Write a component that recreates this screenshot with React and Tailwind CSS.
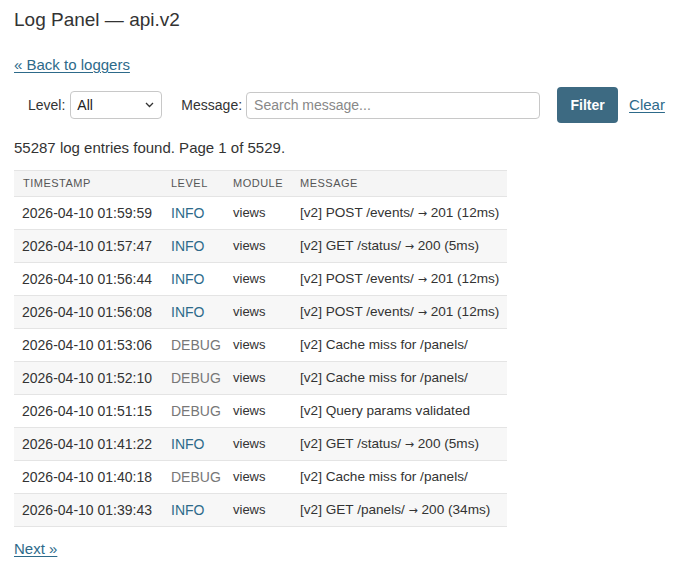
const rows = [
  ["2026-04-10 01:59:59", "INFO", "views", "[v2] POST /events/", "201 (12ms)"],
  ["2026-04-10 01:57:47", "INFO", "views", "[v2] GET /status/", "200 (5ms)"],
  ["2026-04-10 01:56:44", "INFO", "views", "[v2] POST /events/", "201 (12ms)"],
  ["2026-04-10 01:56:08", "INFO", "views", "[v2] POST /events/", "201 (12ms)"],
  ["2026-04-10 01:53:06", "DEBUG", "views", "[v2] Cache miss for /panels/"],
  ["2026-04-10 01:52:10", "DEBUG", "views", "[v2] Cache miss for /panels/"],
  ["2026-04-10 01:51:15", "DEBUG", "views", "[v2] Query params validated"],
  ["2026-04-10 01:41:22", "INFO", "views", "[v2] GET /status/", "200 (5ms)"],
  ["2026-04-10 01:40:18", "DEBUG", "views", "[v2] Cache miss for /panels/"],
  ["2026-04-10 01:39:43", "INFO", "views", "[v2] GET /panels/", "200 (34ms)"],
];

export default function App() {
  return (
    <div className="min-h-screen bg-white px-[14px] pt-[8px] text-[#333] font-['Liberation_Sans',Arial,sans-serif]">
      <h1 className="text-[19px] leading-[24px] font-normal">Log Panel — api.v2</h1>

      <a href="#" className="mt-[23px] inline-block text-[15px] leading-[20px] text-[#2d6a8a] underline underline-offset-2">
        « Back to loggers
      </a>

      {/* filter bar */}
      <form className="mt-[10px] flex items-center pl-[14px]" onSubmit={(e) => e.preventDefault()}>
        <label className="shrink-0 text-[14px] mr-[5px]">Level:</label>
        <div className="relative shrink-0">
          <select className="appearance-none w-[92px] h-[28px] rounded-[4px] border border-[#c8c8c8] bg-white pl-[6px] text-[14px] text-[#222] outline-none">
            <option>All</option>
            <option>DEBUG</option>
            <option>INFO</option>
          </select>
          <svg className="pointer-events-none absolute right-[8px] top-[11px]" width="9" height="6" viewBox="0 0 9 6" fill="none">
            <path d="M1 1l3.5 3.5L8 1" stroke="#333" strokeWidth="1.3" />
          </svg>
        </div>
        <label className="shrink-0 ml-[19px] mr-[4px] text-[14px]">Message:</label>
        <input
          placeholder="Search message..."
          className="shrink-0 w-[294px] h-[27px] rounded-[4px] border border-[#c8c8c8] px-[7px] text-[14px] placeholder:text-[#888] outline-none"
        />
        <button className="shrink-0 ml-[17px] h-[36px] w-[61px] rounded-[4px] bg-[#3d6a82] text-[14px] font-semibold text-white">
          Filter
        </button>
        <a href="#" className="shrink-0 ml-[11px] text-[15px] text-[#2d6a8a] underline underline-offset-2">Clear</a>
      </form>

      <p className="mt-[15px] text-[15px] leading-[20px]">55287 log entries found. Page 1 of 5529.</p>

      <table className="mt-[12px] w-[493px] table-fixed border-collapse text-[14px]">
        <thead>
          <tr className="bg-[#f5f5f5] border-y border-[#e4e4e4]">
            <th className="w-[149px] h-[26px] px-[9px] text-left text-[11px] font-normal uppercase tracking-[0.5px] text-[#555]">Timestamp</th>
            <th className="w-[62px] px-[8px] text-left text-[11px] font-normal uppercase tracking-[0.5px] text-[#555]">Level</th>
            <th className="w-[67px] px-[8px] text-left text-[11px] font-normal uppercase tracking-[0.5px] text-[#555]">Module</th>
            <th className="px-[8px] text-left text-[11px] font-normal uppercase tracking-[0.5px] text-[#555]">Message</th>
          </tr>
        </thead>
        <tbody>
          {rows.map((r, i) => (
            <tr key={i} className={`border-b border-[#e4e4e4] ${i % 2 === 1 ? "bg-[#f7f7f7]" : "bg-white"}`}>
              <td className="h-[33px] px-[8px] whitespace-nowrap">{r[0]}</td>
              <td className={`px-[8px] ${r[1] === "INFO" ? "text-[#2d6a8a]" : "text-[#777]"}`}>{r[1]}</td>
              <td className="px-[8px] text-[13px]">{r[2]}</td>
              <td className="px-[8px] whitespace-nowrap text-[13.6px]">
                {r[3]}
                {r[4] && (
                  <>
                    {" "}
                    <span className="font-['DejaVu_Sans',sans-serif] text-[11px]">→</span> {r[4]}
                  </>
                )}
              </td>
            </tr>
          ))}
        </tbody>
      </table>

      <a href="#" className="mt-[12px] inline-block text-[15px] leading-[20px] text-[#2d6a8a] underline underline-offset-2">
        Next »
      </a>
    </div>
  );
}
